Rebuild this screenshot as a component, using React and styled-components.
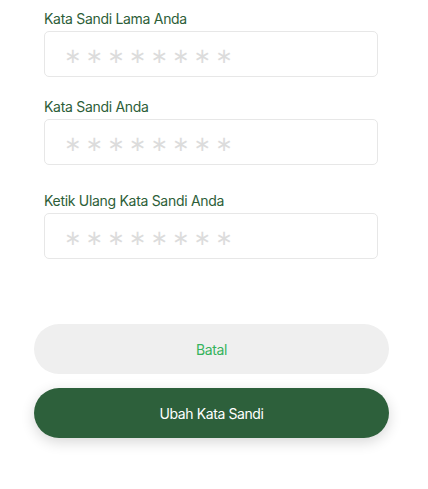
import React from "react";
import styled, { createGlobalStyle } from "styled-components";

const Global = createGlobalStyle`
  html, body { margin: 0; padding: 0; background: #ffffff; }
  body { font-family: Inter, "Noto Sans", sans-serif; }
  * { box-sizing: border-box; }
`;

const Page = styled.div`
  width: 428px;
  min-height: 489px;
  padding: 9px 0 0;
  display: flex;
  flex-direction: column;
`;

const Fields = styled.div`
  display: flex;
  flex-direction: column;
  padding: 0 50px 0 44px;
`;

const Field = styled.div`
  display: flex;
  flex-direction: column;
  gap: 2px;
  margin-top: ${(p) => p.$top || 0}px;
`;

const Label = styled.label`
  font-family: Inter, "Noto Sans", sans-serif;
  font-size: 14px;
  line-height: 20px;
  font-weight: 400;
  letter-spacing: -0.3px;
  color: #2d5e38;
`;

const Input = styled.input`
  width: 334px;
  height: 46px;
  border: 1px solid #e7e7e7;
  border-radius: 5px;
  background: #fff;
  padding: 3px 0 0 19px;
  font-family: "DejaVu Sans", sans-serif;
  font-size: 21px;
  letter-spacing: 4px;
  color: #333;
  outline: none;
  &::placeholder {
    color: #dcdcdc;
    opacity: 1;
  }
`;

const Actions = styled.div`
  display: flex;
  flex-direction: column;
  gap: 14px;
  padding: 0 39px 0 34px;
  margin-top: 65px;
`;

const Button = styled.button`
  width: 355px;
  height: 50px;
  border: none;
  border-radius: 25px;
  font-family: Inter, "Noto Sans", sans-serif;
  font-size: 14px;
  font-weight: 400;
  letter-spacing: -0.4px;
  cursor: pointer;
  background: ${(p) => (p.$primary ? "#2d603b" : "#efefef")};
  color: ${(p) => (p.$primary ? "#ffffff" : "#35b35c")};
  box-shadow: ${(p) => (p.$primary ? "0 4px 14px rgba(0,0,0,0.16)" : "none")};
`;

const mask = "∗∗∗∗∗∗∗∗";

export default function App() {
  return (
    <>
      <Global />
      <Page>
        <Fields>
          <Field>
            <Label>Kata Sandi Lama Anda</Label>
            <Input type="password" placeholder={mask} />
          </Field>
          <Field $top={20}>
            <Label>Kata Sandi Anda</Label>
            <Input type="password" placeholder={mask} />
          </Field>
          <Field $top={26}>
            <Label>Ketik Ulang Kata Sandi Anda</Label>
            <Input type="password" placeholder={mask} />
          </Field>
        </Fields>
        <Actions>
          <Button type="button">Batal</Button>
          <Button type="button" $primary>
            Ubah Kata Sandi
          </Button>
        </Actions>
      </Page>
    </>
  );
}
